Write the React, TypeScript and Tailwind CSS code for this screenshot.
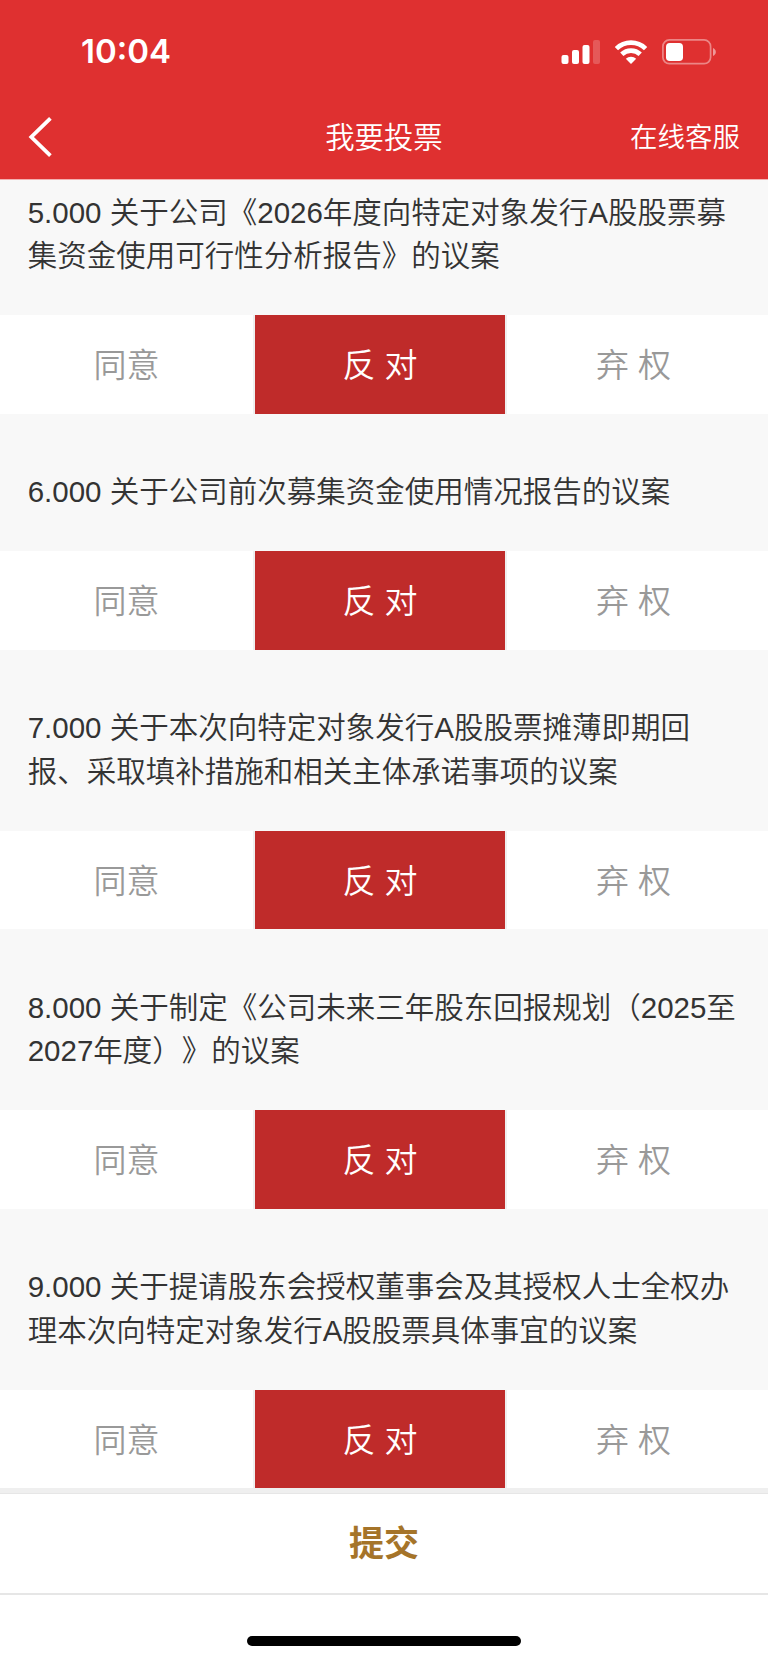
type Choice = "agree" | "against" | "abstain";

type Proposal = {
  id: string;
  lines: string[];
  choice: Choice;
};

const proposals: Proposal[] = [
  {
    id: "5.000",
    lines: ["关于公司《2026年度向特定对象发行A股股票募", "集资金使用可行性分析报告》的议案"],
    choice: "against",
  },
  { id: "6.000", lines: ["关于公司前次募集资金使用情况报告的议案"], choice: "against" },
  {
    id: "7.000",
    lines: ["关于本次向特定对象发行A股股票摊薄即期回", "报、采取填补措施和相关主体承诺事项的议案"],
    choice: "against",
  },
  {
    id: "8.000",
    lines: ["关于制定《公司未来三年股东回报规划（2025至", "2027年度）》的议案"],
    choice: "against",
  },
  {
    id: "9.000",
    lines: ["关于提请股东会授权董事会及其授权人士全权办", "理本次向特定对象发行A股股票具体事宜的议案"],
    choice: "against",
  },
];

const options: { value: Choice; label: string; width: string }[] = [
  { value: "agree", label: "同意", width: "w-[255px] border-r-2" },
  { value: "against", label: "反 对", width: "w-[250px]" },
  { value: "abstain", label: "弃 权", width: "w-[255px] border-l-2" },
];

export default function App() {
  return (
    <div className="flex h-[1663px] w-[768px] flex-col overflow-hidden bg-[#f8f8f8] font-['Liberation_Sans','Noto_Sans_CJK_SC',sans-serif] font-[350] text-[#333] [text-spacing-trim:space-all]">
      <header className="flex h-[180px] shrink-0 flex-col border-b border-[#f3b0b0] bg-[#df3030] text-white">
        <StatusBar />
        <NavBar />
      </header>

      <main className="flex h-[1308px] shrink-0 flex-col overflow-hidden pt-[10.5px]">
        {proposals.map((p) => (
          <ProposalItem key={p.id} proposal={p} />
        ))}
      </main>

      <footer className="flex flex-1 flex-col items-center border-t-[5px] border-[#efefef] bg-white">
        <button
          type="button"
          className="h-[102px] w-full border-t border-b-2 border-[#e6e6e6] pt-[2px] text-[35px] font-bold text-[#a57429]"
        >
          提交
        </button>
        <div className="mt-[41px] h-[10px] w-[274px] rounded-full bg-black" />
      </footer>
    </div>
  );
}

function StatusBar() {
  return (
    <div className="flex h-[102px] items-center justify-between pt-px pr-[52px] pl-[81px]">
      <span className="font-['Inter',sans-serif] text-[33px] leading-none font-semibold">10:04</span>
      <svg width="156" height="28" viewBox="560 37 156 28" fill="white">
        <rect x="561.5" y="54" width="7" height="9" rx="2" />
        <rect x="572" y="49" width="7" height="14" rx="2" />
        <rect x="582.5" y="44" width="7" height="19" rx="2" />
        <rect x="593" y="39" width="7" height="24" rx="2" opacity="0.2" />
        <g fill="none" stroke="white" strokeWidth="4.7">
          <path d="M616.4 47.6A21 21 0 0 1 645.6 47.6" />
          <path d="M621.8 53.3A13.2 13.2 0 0 1 640.2 53.3" />
        </g>
        <path d="M631 63L625.8 57.8A7.4 7.4 0 0 1 636.2 57.8Z" />
        <rect x="662.9" y="38.9" width="47.7" height="23.8" rx="6.5" fill="none" stroke="white" strokeWidth="1.7" opacity="0.42" />
        <rect x="666" y="42" width="17" height="18" rx="3.8" />
        <path d="M713 47c3.8 1.6 3.8 6.4 0 8z" opacity="0.5" />
      </svg>
    </div>
  );
}

function NavBar() {
  return (
    <div className="grid h-[70px] grid-cols-3 items-center px-7">
      <svg width="26" height="40" viewBox="0 0 26 40" fill="none" stroke="white" strokeWidth="3.8">
        <path d="M22.4 1.4L3.3 20l19.1 18.6" />
      </svg>
      <h1 className="pt-[2px] text-center text-[29.4px] leading-none">我要投票</h1>
      <a className="pt-[2px] text-right text-[27.5px] leading-none">在线客服</a>
    </div>
  );
}

function ProposalItem({ proposal }: { proposal: Proposal }) {
  return (
    <section className="mb-[56.2px] shrink-0">
      <h2 className="mb-[37.6px] pl-[27.7px] text-[29.5px] leading-[43.6px] whitespace-nowrap">
        {proposal.lines.map((line, i) => (
          <span key={line} className="block">
            {i === 0 && `${proposal.id} `}
            {line}
          </span>
        ))}
      </h2>
      <div className="flex h-[98.6px] bg-white">
        {options.map((o) => (
          <button
            key={o.value}
            type="button"
            className={`${o.width} shrink-0 border-[#efefef] pt-[2px] text-[33px] leading-none ${
              o.value === proposal.choice ? "bg-[#bf2b2a] text-white" : "text-[#999]"
            }`}
          >
            {o.label}
          </button>
        ))}
      </div>
    </section>
  );
}
